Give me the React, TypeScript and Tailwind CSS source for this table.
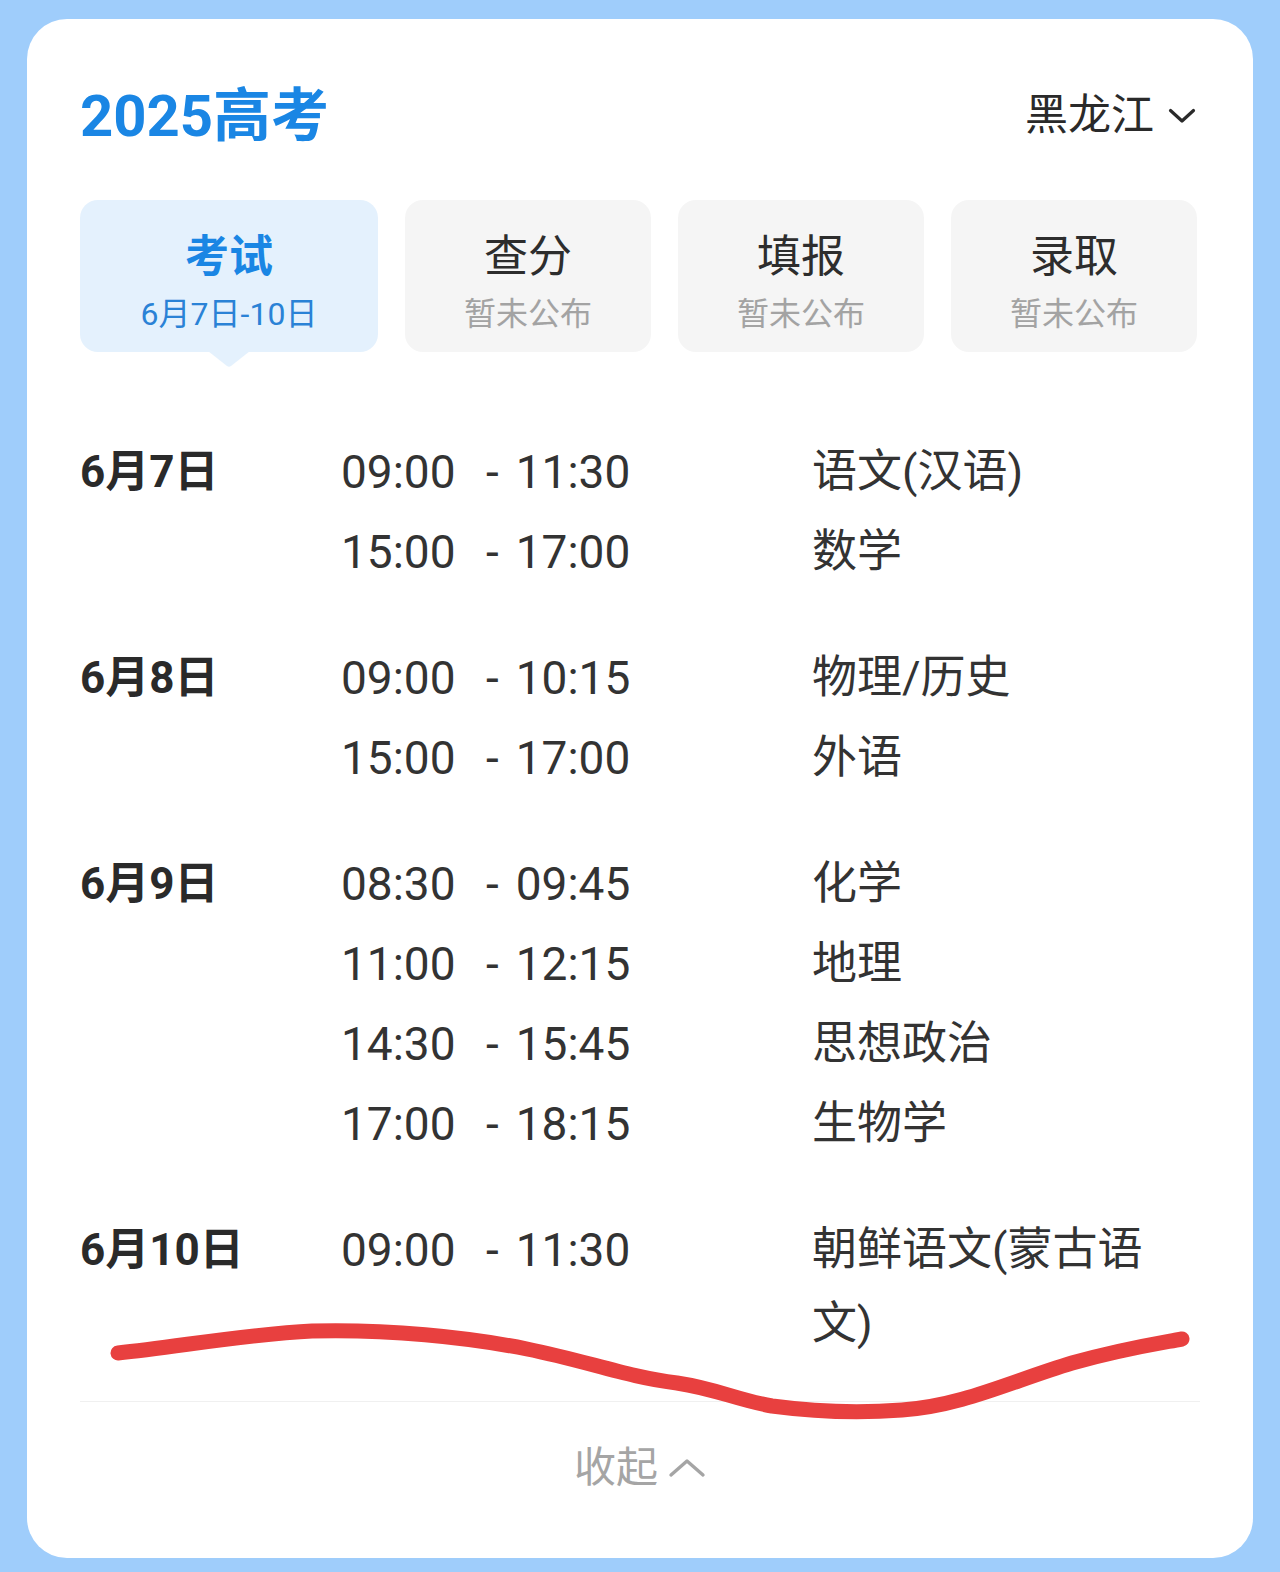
import React from "react";

type Session = { start: string; end: string; subject: string };
type Day = { date: string; sessions: Session[] };

const tabs = [
  { title: "考试", sub: "6月7日-10日", active: true },
  { title: "查分", sub: "暂未公布", active: false },
  { title: "填报", sub: "暂未公布", active: false },
  { title: "录取", sub: "暂未公布", active: false },
];

const schedule: Day[] = [
  {
    date: "6月7日",
    sessions: [
      { start: "09:00", end: "11:30", subject: "语文(汉语)" },
      { start: "15:00", end: "17:00", subject: "数学" },
    ],
  },
  {
    date: "6月8日",
    sessions: [
      { start: "09:00", end: "10:15", subject: "物理/历史" },
      { start: "15:00", end: "17:00", subject: "外语" },
    ],
  },
  {
    date: "6月9日",
    sessions: [
      { start: "08:30", end: "09:45", subject: "化学" },
      { start: "11:00", end: "12:15", subject: "地理" },
      { start: "14:30", end: "15:45", subject: "思想政治" },
      { start: "17:00", end: "18:15", subject: "生物学" },
    ],
  },
  {
    date: "6月10日",
    sessions: [{ start: "09:00", end: "11:30", subject: "朝鲜语文(蒙古语文)" }],
  },
];

const cjk = "font-['Roboto','Noto_Sans_CJK_SC',sans-serif]";

export default function App() {
  return (
    <div className={`min-h-[1572px] w-[1280px] bg-[#9fcdfb] pb-[14px] pl-[27px] pr-[27px] pt-[19px] ${cjk}`}>
      <div className="relative flex h-[1539px] flex-col rounded-[40px] bg-white px-[53px]">
        {/* header */}
        <div className="flex h-[181px] items-center justify-between pt-[12px]">
          <h1 className="text-[58px] font-bold leading-none text-[#1a86e4]">2025高考</h1>
          <button className="flex items-center gap-[14px] pr-[4px] text-[43px] leading-none text-[#2a2a2a]">
            黑龙江
            <svg width="28" height="18" viewBox="0 0 28 18" fill="none">
              <path d="M2.5 3.5 L14 14 L25.5 3.5" stroke="#2a2a2a" strokeWidth="3.2" strokeLinecap="round" strokeLinejoin="round" />
            </svg>
          </button>
        </div>

        {/* tabs */}
        <div className="flex gap-[27px]">
          {tabs.map((t) => (
            <div
              key={t.title}
              className={`relative flex h-[152px] flex-col items-center justify-center rounded-[18px] pt-[12px] ${
                t.active ? "w-[298px] bg-[#e4f1fd]" : "w-[246px] bg-[#f5f5f5]"
              }`}
            >
              <span
                className={`text-[44px] leading-[52px] ${t.active ? "font-bold text-[#1a86e4]" : "text-[#2d2d2d]"}`}
              >
                {t.title}
              </span>
              <span className={`mt-[11px] text-[32px] leading-[40px] ${t.active ? "text-[#2a82d6]" : "text-[#a3a3a3]"}`}>
                {t.sub}
              </span>
              {t.active && (
                <svg className="absolute left-[128px] top-[151px]" width="42" height="16" viewBox="0 0 42 16">
                  <path d="M0 0 L42 0 L23 15 Q21 16.5 19 15 Z" fill="#e4f1fd" />
                </svg>
              )}
            </div>
          ))}
        </div>

        {/* schedule */}
        <div className="mt-[83px] flex flex-col gap-[52px]">
          {schedule.map((d) => (
            <div key={d.date} className="flex">
              <div className="w-[261px] text-[44px] font-bold leading-[74px] text-[#2a2a2a]">{d.date}</div>
              <div className="flex flex-col gap-[6px]">
                {d.sessions.map((s) => (
                  <div key={s.start + s.subject} className="flex text-[#333]">
                    <div className="flex w-[471px] text-[46px] leading-[74px] font-['Roboto',sans-serif]">
                      <span className="w-[145px]">{s.start}</span>
                      <span>-</span>
                      <span className="ml-[17px]">{s.end}</span>
                    </div>
                    <div className="w-[340px] text-[45px] leading-[74px]">{s.subject}</div>
                  </div>
                ))}
              </div>
            </div>
          ))}
        </div>

        {/* divider + collapse */}
        <div className="mt-[40px] h-px w-full bg-[#f0f0f0]" />
        <button className="mt-[45px] flex items-center justify-center gap-[10px] text-[42px] leading-none text-[#a5a5a5]">
          收起
          <svg width="38" height="20" viewBox="0 0 38 20" fill="none">
            <path d="M3 17 L19 3 L35 17" stroke="#a5a5a5" strokeWidth="3.4" strokeLinecap="round" strokeLinejoin="round" />
          </svg>
        </button>

        {/* hand-drawn red mark over the content */}
        <svg
          className="pointer-events-none absolute left-0 top-0"
          width="1226"
          height="1539"
          viewBox="0 0 1226 1539"
          fill="none"
        >
          <path
            d="M91 1334 C150 1328 220 1315 285 1312 C360 1310 440 1318 500 1330 C560 1342 600 1358 650 1364 C690 1370 710 1381 745 1387 C790 1393 835 1394 875 1391 C935 1387 985 1362 1045 1344 C1095 1330 1122 1326 1155 1320"
            stroke="#e8403f"
            strokeWidth="15"
            strokeLinecap="round"
            strokeLinejoin="round"
          />
        </svg>
      </div>
    </div>
  );
}
